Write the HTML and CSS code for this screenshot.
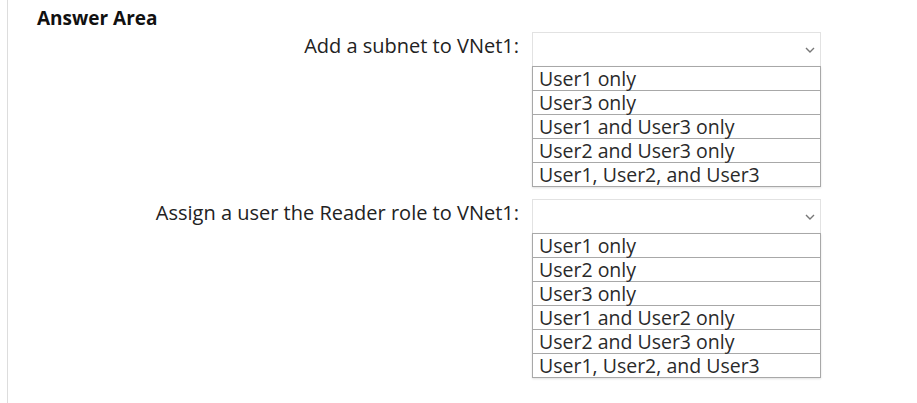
FILE: index.html
```html
<!DOCTYPE html>
<html lang="en">
<head>
  <meta charset="UTF-8">
  <title>Answer Area</title>
  <link rel="stylesheet" href="styles.css">
</head>
<body>
  <div class="answer-area">
    <h3 class="title">Answer Area</h3>

    <!-- subnet -->
    <div class="question">
      <div class="label">Add a subnet to VNet1:</div>
      <div class="dropdown">
        <div class="select">
          <svg class="chevron" width="10" height="6" viewBox="0 0 10 6"><polyline points="1,1 5,5 9,1" fill="none" stroke="#777" stroke-width="1.4"/></svg>
        </div>
        <ul class="options">
          <li>User1 only</li>
          <li>User3 only</li>
          <li>User1 and User3 only</li>
          <li>User2 and User3 only</li>
          <li>User1, User2, and User3</li>
        </ul>
      </div>
    </div>

    <!-- reader role -->
    <div class="question">
      <div class="label">Assign a user the Reader role to VNet1:</div>
      <div class="dropdown">
        <div class="select">
          <svg class="chevron" width="10" height="6" viewBox="0 0 10 6"><polyline points="1,1 5,5 9,1" fill="none" stroke="#777" stroke-width="1.4"/></svg>
        </div>
        <ul class="options">
          <li>User1 only</li>
          <li>User2 only</li>
          <li>User3 only</li>
          <li>User1 and User2 only</li>
          <li>User2 and User3 only</li>
          <li>User1, User2, and User3</li>
        </ul>
      </div>
    </div>
  </div>
</body>
</html>
```

FILE: styles.css
```css
body {
  margin: 0;
  font-family: "Open Sans", "Noto Sans", sans-serif;
  background-color: white;
  color: #222;
}
.answer-area {
  margin-left: 7px;
  border-left: 1px solid #ddd;
  min-height: 403px;
  box-sizing: border-box;
  padding: 8px 0 0 29px;
}
.title {
  margin: 0 0 4px 0;
  font-size: 19px;
  line-height: 20px;
  font-weight: bold;
  color: #111;
}
.question {
  display: grid;
  grid-template-columns: 487px 289px;
  column-gap: 8px;
  margin-bottom: 12px;
}
.label {
  text-align: right;
  font-size: 20px;
  line-height: 24px;
  margin-top: 2px;
  padding-right: 5px;
  color: #222;
}
.select {
  height: 33px;
  border: 1px solid #e2e2e2;
  border-bottom: none;
  display: flex;
  justify-content: flex-end;
  align-items: center;
  padding-right: 5px;
}
.chevron {
  display: block;
}
.options {
  list-style: none;
  margin: 0;
  padding: 0;
  border: 1px solid #a8a8a8;
  box-shadow: 0 1px 2px rgba(0, 0, 0, 0.12);
}
.options li {
  font-size: 19.5px;
  line-height: 23px;
  padding-left: 6px;
  border-top: 1px solid #a8a8a8;
  color: #2a2a2a;
}
.options li:first-child {
  border-top: none;
}
```
